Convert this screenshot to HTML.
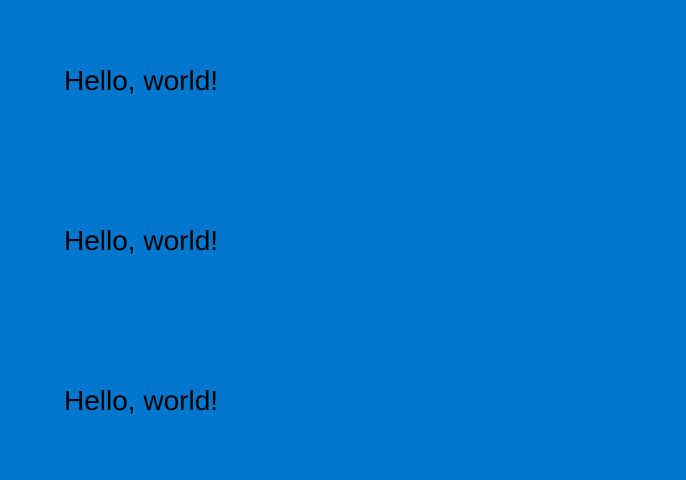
<!DOCTYPE html>
<html><head><style>
html,body{margin:0;padding:0;width:686px;height:480px;background:#0077cc;overflow:hidden}
div{position:absolute;left:64px;font-family:"Liberation Sans",Arial,sans-serif;font-size:28px;line-height:32px;color:#000;white-space:nowrap}
</style></head><body>
<div style="top:65px">Hello, world!</div>
<div style="top:225px">Hello, world!</div>
<div style="top:385px">Hello, world!</div>
</body></html>
